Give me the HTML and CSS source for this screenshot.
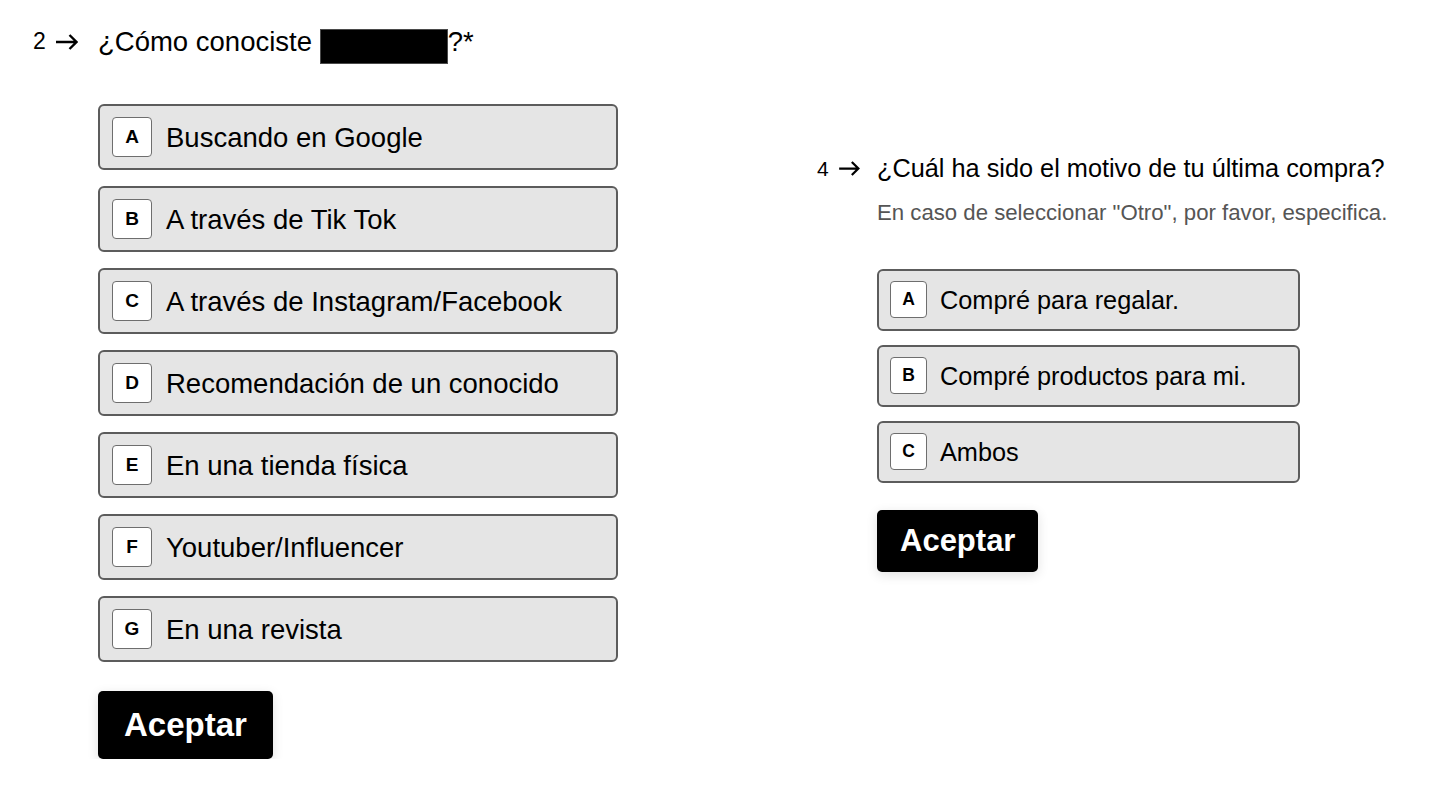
FILE: index.html
```html
<!DOCTYPE html>
<html lang="es">
<head>
<meta charset="utf-8">
<title>Encuesta</title>
<link rel="stylesheet" href="styles.css">
</head>
<body>
<main class="page">
  <section class="question question--main">
    <div class="q-index">
      <span class="q-num">2</span>
      <svg class="q-arrow" viewBox="0 0 23 16" aria-hidden="true"><path d="M1 8H21.5M14.5 1L21.5 8L14.5 15" fill="none" stroke="#000" stroke-width="2.4"/></svg>
    </div>
    <div class="q-body">
      <h2 class="q-title">¿Cómo conociste <span class="redacted"></span>?*</h2>
      <ul class="choices">
        <li class="choice"><span class="choice-key">A</span><span class="choice-label">Buscando en Google</span></li>
        <li class="choice"><span class="choice-key">B</span><span class="choice-label">A través de Tik Tok</span></li>
        <li class="choice"><span class="choice-key">C</span><span class="choice-label">A través de Instagram/Facebook</span></li>
        <li class="choice"><span class="choice-key">D</span><span class="choice-label">Recomendación de un conocido</span></li>
        <li class="choice"><span class="choice-key">E</span><span class="choice-label">En una tienda física</span></li>
        <li class="choice"><span class="choice-key">F</span><span class="choice-label">Youtuber/Influencer</span></li>
        <li class="choice"><span class="choice-key">G</span><span class="choice-label">En una revista</span></li>
      </ul>
      <button class="submit" type="button">Aceptar</button>
    </div>
  </section>

  <section class="question question--side">
    <div class="q-index">
      <span class="q-num">4</span>
      <svg class="q-arrow" viewBox="0 0 23 16" aria-hidden="true"><path d="M1 8H21.5M14.5 1L21.5 8L14.5 15" fill="none" stroke="#000" stroke-width="2.4"/></svg>
    </div>
    <div class="q-body">
      <h2 class="q-title">¿Cuál ha sido el motivo de tu última compra?</h2>
      <p class="q-desc">En caso de seleccionar "Otro", por favor, especifica.</p>
      <ul class="choices">
        <li class="choice"><span class="choice-key">A</span><span class="choice-label">Compré para regalar.</span></li>
        <li class="choice"><span class="choice-key">B</span><span class="choice-label">Compré productos para mi.</span></li>
        <li class="choice"><span class="choice-key">C</span><span class="choice-label">Ambos</span></li>
      </ul>
      <button class="submit" type="button">Aceptar</button>
    </div>
  </section>
</main>
</body>
</html>
```

FILE: styles.css
```css
* {
  box-sizing: border-box;
}

html, body {
  margin: 0;
  padding: 0;
  background: #ffffff;
}

body {
  font-family: "Liberation Sans", Arial, Helvetica, sans-serif;
  color: #000;
}

.page {
  display: flex;
  align-items: flex-start;
  padding: 24px 0 0 33px;
}

.question {
  display: flex;
  align-items: flex-start;
}

.q-index {
  display: flex;
  align-items: center;
  flex: none;
}

.q-num {
  line-height: 1;
}

.q-arrow {
  display: block;
}

.q-body {
  display: flex;
  flex-direction: column;
  align-items: flex-start;
}

.q-title {
  margin: 0;
  font-weight: 400;
  line-height: 1.3;
}

.redacted {
  display: inline-block;
  width: 128px;
  height: 35px;
  background: #000;
  border: 1px solid #4a4a4a;
  vertical-align: -13px;
}

.q-desc {
  margin: 0;
  color: #555;
  line-height: 1.3;
}

.choices {
  list-style: none;
  margin: 0;
  padding: 0;
  display: flex;
  flex-direction: column;
}

.choice {
  display: flex;
  align-items: center;
  background: #e5e5e5;
  border: 2px solid #5c5c5c;
  border-radius: 6px;
}

.choice-key {
  display: flex;
  align-items: center;
  justify-content: center;
  flex: none;
  background: #fff;
  border: 1.5px solid #6e6e6e;
  border-radius: 4px;
  font-weight: 700;
}

.choice-label {
  line-height: 1.2;
}

.submit {
  display: inline-flex;
  align-items: center;
  justify-content: center;
  background: #000;
  color: #fff;
  border: none;
  border-radius: 5px;
  font-family: inherit;
  font-weight: 700;
  box-shadow: 0 3px 12px rgba(0, 0, 0, 0.12);
  cursor: pointer;
}

/* main (left) question */
.question--main .q-index {
  width: 65px;
  height: 35px;
  gap: 9px;
}

.question--main .q-num {
  font-size: 23px;
}

.question--main .q-arrow {
  width: 23px;
  height: 16px;
}

.question--main .q-title {
  font-size: 27.5px;
}

.question--main .choices {
  margin-top: 40px;
  gap: 16px;
}

.question--main .choice {
  width: 520px;
  height: 66px;
  padding-left: 12px;
}

.question--main .choice-key {
  width: 40px;
  height: 40px;
  font-size: 19px;
}

.question--main .choice-label {
  margin-left: 14px;
  font-size: 27.5px;
}

.question--main .submit {
  margin-top: 29px;
  height: 68px;
  padding: 0 26px;
  font-size: 33px;
}

/* side (right) question */
.question--side {
  margin-left: 199px;
  margin-top: 128px;
}

.question--side .q-index {
  width: 60px;
  height: 32px;
  gap: 9px;
}

.question--side .q-num {
  font-size: 21px;
}

.question--side .q-arrow {
  width: 22px;
  height: 15px;
}

.question--side .q-title {
  font-size: 25.3px;
}

.question--side .q-desc {
  margin-top: 14px;
  font-size: 22.2px;
}

.question--side .choices {
  margin-top: 41px;
  gap: 14px;
}

.question--side .choice {
  width: 423px;
  height: 62px;
  padding-left: 11px;
}

.question--side .choice-key {
  width: 37px;
  height: 37px;
  font-size: 17.5px;
}

.question--side .choice-label {
  margin-left: 13px;
  font-size: 25.3px;
}

.question--side .submit {
  margin-top: 27px;
  height: 62px;
  padding: 0 23px;
  font-size: 31px;
}
```
